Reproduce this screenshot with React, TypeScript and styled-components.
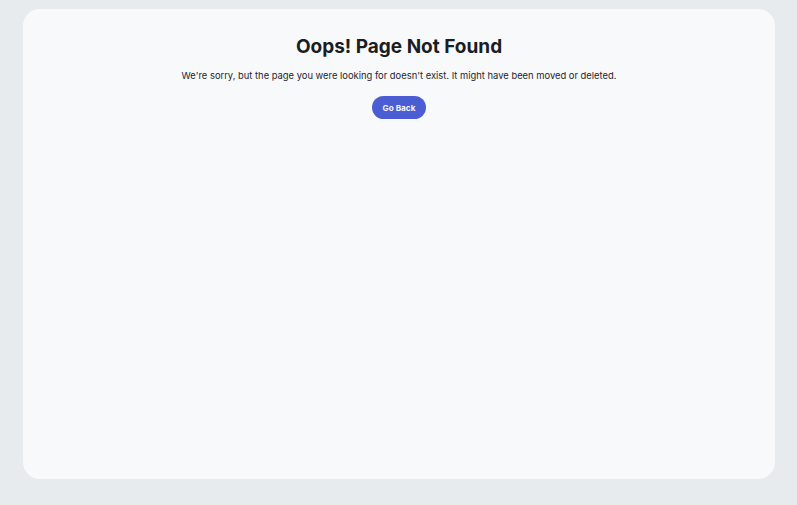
import * as React from 'react';
import styled, { createGlobalStyle } from 'styled-components';

const GlobalStyle = createGlobalStyle`
  html, body {
    margin: 0;
    height: 100%;
    background: #e8ebee;
    font-family: Inter, "Noto Sans", sans-serif;
  }
  #root {
    height: 100%;
  }
`;

const Page = styled.div`
  box-sizing: border-box;
  height: 100vh;
  padding: 9px 22px 26px 23px;
  display: flex;
`;

const Card = styled.main`
  flex: 1;
  background: #f8f9fb;
  border-radius: 17px;
  display: flex;
  flex-direction: column;
  align-items: center;
  padding-top: 26px;
`;

const Title = styled.h1`
  margin: 0;
  font-size: 19px;
  font-weight: 700;
  color: #1b1d24;
  line-height: 24px;
`;

const Message = styled.p`
  margin: 10px 0 0;
  font-size: 9.4px;
  color: #23252c;
  line-height: 14px;
`;

const BackButton = styled.button`
  margin-top: 13px;
  height: 23px;
  padding: 0 10.5px;
  border: none;
  border-radius: 12px;
  background: #4a5dd3;
  color: #f4f5fc;
  font-family: Inter, "Noto Sans", sans-serif;
  font-size: 8.2px;
  font-weight: 700;
  cursor: pointer;
`;

export default function App() {
  return (
    <>
      <GlobalStyle />
      <Page>
        <Card>
          <Title>Oops! Page Not Found</Title>
          <Message>
            We're sorry, but the page you were looking for doesn't exist. It might have been moved or deleted.
          </Message>
          <BackButton>Go Back</BackButton>
        </Card>
      </Page>
    </>
  );
}
